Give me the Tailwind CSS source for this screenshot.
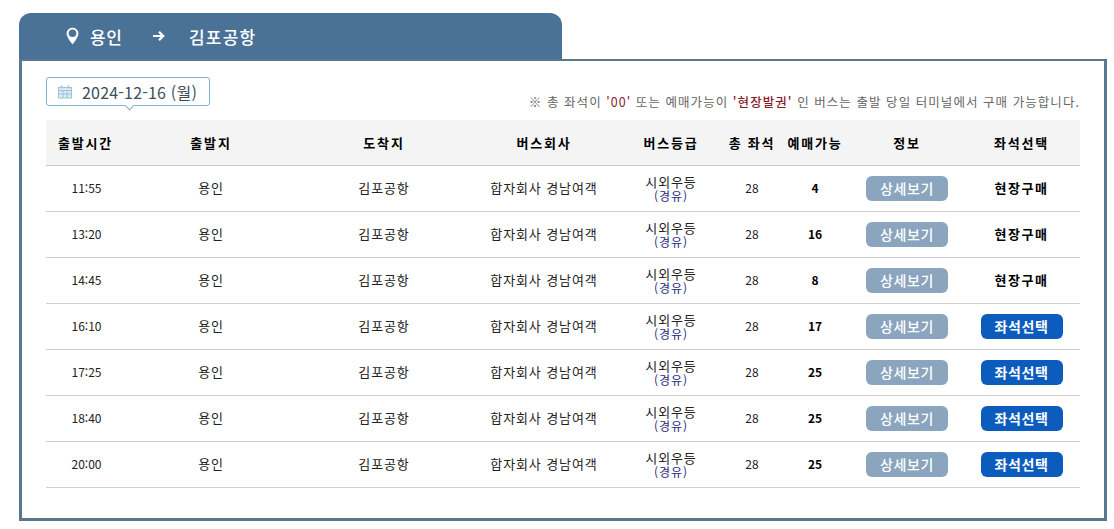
<!DOCTYPE html>
<html lang="ko">
<head>
    <meta charset="UTF-8">
    <title>배차 조회</title>
    <script src="https://cdn.jsdelivr.net/npm/@tailwindcss/browser@4"></script>
</head>
<body class="bg-white font-['Noto_Sans_CJK_KR','Noto_Sans',sans-serif] text-black w-[1114px] h-[529px] overflow-hidden">
    <div class="pt-[13px] pl-[19px] w-[1107px]">
        <!-- route tab -->
        <div class="w-[543px] h-[46px] bg-[#4a7296] rounded-t-[12px] flex items-center text-white text-[17px] font-medium leading-none">
            <svg class="ml-[47px] w-[13px] h-[18px]" viewBox="0 0 13 18" fill="none">
                <path d="M6.500 0.800C3.100 0.800 0.600 3.300 0.600 6.500c0 3.900 5.900 10.900 5.900 10.900s5.900-7 5.900-10.900C12.400 3.300 9.900 0.800 6.500 0.800z" fill="#fff"/>
                <circle cx="6.500" cy="6.300" r="3.800" fill="#4a7296"/>
            </svg>
            <span class="ml-[11px] w-[62px] tracking-[0.5px]">용인</span>
            <svg class="w-[13px] h-[12px]" viewBox="0 0 13 12" fill="none" stroke="#fff" stroke-width="2.200">
                <path d="M1 6h10M7 1.800 11.200 6 7 10.200"/>
            </svg>
            <span class="ml-[24px] tracking-[1.2px]">김포공항</span>
        </div>

        <!-- panel -->
        <div class="w-[1088px] h-[462px] border-[3px] border-t-[2px] border-[#5a788d] pl-[24px] pr-[24px]">
            <div class="h-[59px] flex justify-between">
                <div class="relative mt-[16px] w-[164px] h-[29px] border border-[#7fb3cf] rounded-[3px] flex items-center text-[#3c4f5c] text-[16px] leading-none">
                    <svg class="ml-[11px] w-[14px] h-[14px]" viewBox="0 0 14 14" fill="none" stroke="#9cc4da" stroke-width="1">
                        <rect x="0.500" y="2.500" width="13" height="10.500" fill="#dcebf3"/>
                        <path d="M0.500 5.500h13M0.500 9h13M5 5.500V13M9 5.500V13"/>
                        <path d="M3.500 0.500v3M10.500 0.500v3" stroke-width="1.500"/>
                    </svg>
                    <span class="ml-[10px] tracking-[0.2px] whitespace-nowrap">2024-12-16 (월)</span>
                    <span class="absolute left-[79px] -bottom-[4px] w-[7px] h-[7px] bg-white border-r border-b border-[#7fb3cf] rotate-45"></span>
                </div>
                <p class="mt-[33px] text-[12.500px] leading-[16px] text-[#666] tracking-[1.05px] whitespace-nowrap">※ 총 좌석이 <span class="text-[#8b1a2b]">'00'</span> 또는 예매가능이 <span class="text-[#8b1a2b] font-medium">'현장발권'</span> 인 버스는 출발 당일 터미널에서 구매 가능합니다.</p>
            </div>

            <div id="table" class="w-[1034px] text-[13px] text-[#222]">
                <div class="grid grid-cols-[79px_172px_174px_146px_108px_54px_72px_112px_117px] h-[46px] items-center text-center bg-[#f4f4f4] border-b border-[#c8c8c8] font-bold text-black tracking-[1.800px] whitespace-nowrap">
                    <div>출발시간</div><div>출발지</div><div>도착지</div><div>버스회사</div><div>버스등급</div><div>총 좌석</div><div>예매가능</div><div>정보</div><div>좌석선택</div>
                </div>
                <div id="rows"></div>
            </div>
        </div>
    </div>

    <script>
        const rows = [
            ['11:55', '4', false],
            ['13:20', '16', false],
            ['14:45', '8', false],
            ['16:10', '17', true],
            ['17:25', '25', true],
            ['18:40', '25', true],
            ['20:00', '25', true]
        ];

        document.getElementById('rows').innerHTML = rows.map(r => `
            <div class="grid grid-cols-[79px_172px_174px_146px_108px_54px_72px_112px_117px] h-[46px] items-center text-center border-b border-[#cfcfcf]">
                <div class="pb-[2px] pl-[2px] text-[12px]">${r[0]}</div>
                <div class="pb-[2px] tracking-[0.9px]">용인</div>
                <div class="pb-[2px] tracking-[0.9px]">김포공항</div>
                <div class="pb-[2px] tracking-[0.9px] whitespace-nowrap">합자회사 경남여객</div>
                <div class="pt-[1px] tracking-[0.9px]"><div class="h-[14px] leading-[14px]">시외우등</div><div class="h-[14px] leading-[14px] text-[12px] text-[#2a2a80]">(경유)</div></div>
                <div class="pb-[2px] text-[12px]">28</div>
                <div class="pb-[2px] text-[12px] font-bold text-black">${r[1]}</div>
                <div class="flex justify-center"><span class="w-[82px] h-[25px] rounded-[6px] bg-[#8aa5bd] text-white text-[14px] font-medium tracking-[0.6px] leading-[24px]">상세보기</span></div>
                <div class="flex justify-center">${r[2]
                    ? '<span class="w-[82px] h-[25px] rounded-[6px] bg-[#0b5cbd] text-white text-[14px] font-bold tracking-[0.6px] leading-[24px]">좌석선택</span>'
                    : '<span class="pb-[2px] font-bold text-black tracking-[1.6px]">현장구매</span>'}</div>
            </div>`).join('');
    </script>
</body>
</html>
